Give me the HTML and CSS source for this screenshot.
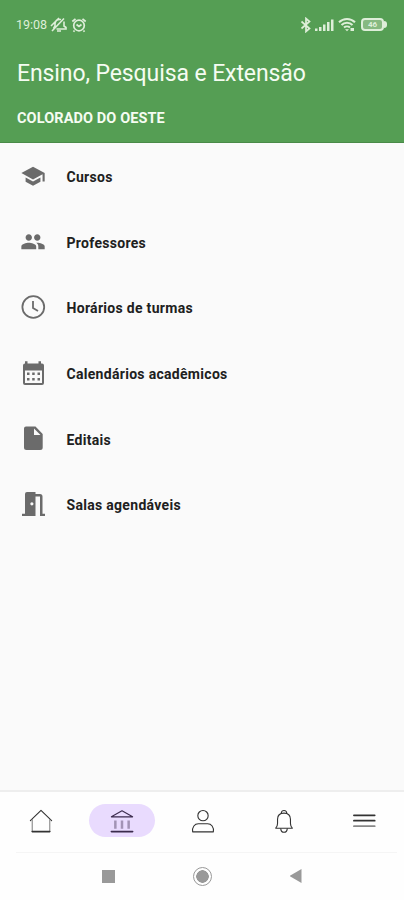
FILE: index.html
```
<!DOCTYPE html>
<html lang="pt-BR">
<head>
  <meta charset="UTF-8" />
  <meta name="viewport" content="width=device-width, initial-scale=1" />
  <title>Ensino, Pesquisa e Extensão</title>
  <link rel="stylesheet" href="styles.css">
</head>
<body>
  <header class="header">
    <div class="status-bar">
      <span class="time">19:08</span>
      <svg class="muted" width="18" height="18" viewBox="0 0 18 18" fill="none" stroke="currentColor" stroke-width="1.6">
        <path d="M3.500 12.500 5 10V7.500C5.500 4.500 8 3 11 3.500M14 5.500V10l2 1.500V13H6.500M7 15h4M2 15 14 2.500M1 10 9 2" />
      </svg>
      <svg class="alarm" width="16" height="16" viewBox="0 0 16 16" fill="none" stroke="currentColor" stroke-width="1.7">
        <circle cx="8" cy="8.500" r="5.300" />
        <path d="M1.300 4.500 4.500 1.800M14.700 4.500 11.500 1.800M5.500 7.500 8 9.500l2.500-2M3.500 13.500 2.500 14.800M12.500 13.500l1 1.300" />
      </svg>
      <div class="status-right">
        <svg width="12" height="16" viewBox="0 0 12 16" fill="none" stroke="currentColor" stroke-width="1.7">
          <path d="M1.500 4.500 9.500 11.500 6 14.500V1.500l3.500 3-8 7" />
        </svg>
        <svg class="signal" width="19" height="14" viewBox="0 0 19 14" fill="currentColor">
          <path d="M0 10.500h2.500V13H0zM4 9h2.500v4H4zM8 6.500h2.500V13H8zM12 4h2.500v9H12zM16 1.500h2.500V13H16z" />
        </svg>
        <svg class="wifi" width="18" height="15" viewBox="0 0 18 15" fill="none" stroke="currentColor" stroke-width="2">
          <path d="M1 5.200C5.500.8 12.500.8 17 5.200M3.500 8c3-3 8-3 11 0M6 10.600c1.700-1.600 4.300-1.600 6 0" />
          <path d="M7 12.200h4L9 14.200zM12.500 11h3.500v3h-3.500z" fill="currentColor" stroke="none" />
        </svg>
        <div class="battery">46</div>
      </div>
    </div>
    <h1>Ensino, Pesquisa e Extensão</h1>
    <h2>COLORADO DO OESTE</h2>
  </header>

  <main>
    <ul class="menu">
      <li>
        <svg width="28" height="28" viewBox="0 0 28 28"><path transform="translate(1.300 1.500) scale(1.060)" d="M5 13.180v4L12 21l7-3.820v-4L12 17l-7-3.820zM12 3 1 9l11 6 9-4.910V17h2V9L12 3z" /></svg>
        <span>Cursos</span>
      </li>
      <li>
        <svg width="28" height="28" viewBox="0 0 28 28"><path transform="translate(1.300 2) scale(1.060)" d="M16 11c1.660 0 2.990-1.340 2.990-3S17.660 5 16 5s-3 1.340-3 3 1.340 3 3 3zm-8 0c1.660 0 2.990-1.340 2.990-3S9.660 5 8 5 5 6.340 5 8s1.340 3 3 3zm0 2c-2.330 0-7 1.170-7 3.500V19h14v-2.500C15 14.170 10.330 13 8 13zm8 0c-.290 0-.620.020-.970.050C16.190 13.890 17 15.020 17 16.500V19h6v-2.500c0-2.330-4.670-3.500-7-3.500z" /></svg>
        <span>Professores</span>
      </li>
      <li>
        <svg class="clock" width="28" height="28" viewBox="0 0 28 28"><circle cx="14.300" cy="14" r="10.900" /><path d="M14 8v7l5 3" /></svg>
        <span>Horários de turmas</span>
      </li>
      <li>
        <svg width="28" height="28" viewBox="0 0 28 28"><path fill-rule="evenodd" d="M6 4.500V2.300h2.500v2.200h11V2.300H22v2.200h1q2 0 2 2V24q0 2-2 2H6q-2 0-2-2V6.500q0-2 2-2zM6 11.500V24h17V11.500zM8 13.500h2.500V16H8zm5.200 0h2.500V16h-2.500zm5.300 0H21V16h-2.500zM8 19h2.500v2.500H8zm5.200 0h2.500v2.500h-2.500zm5.300 0H21v2.500h-2.500z" /></svg>
        <span>Calendários acadêmicos</span>
      </li>
      <li>
        <svg width="28" height="28" viewBox="0 0 28 28"><path fill-rule="evenodd" d="M7 2.500h9.500L23.700 10v13.500q0 2.500-2.500 2.500H7.500Q5 26 5 23.500V4.500q0-2 2-2zM15 4.500v6.500h6.500z" /></svg>
        <span>Editais</span>
      </li>
      <li>
        <svg width="28" height="28" viewBox="0 0 28 28"><path fill-rule="evenodd" d="M3 23.800h3V4q0-2 2-2h8.500v2H21q2.500 0 2.500 2.500v17.300H26V26h-5V6.500h-4.500V26H3zM12.900 12.200a1.600 1.600 0 1 0 0 3.200 1.600 1.600 0 0 0 0-3.200z" /></svg>
        <span>Salas agendáveis</span>
      </li>
    </ul>
  </main>

  <nav class="tabs">
    <a class="tab">
      <svg width="24" height="24" viewBox="0 0 26 26"><path d="M1.500 12.500 13 1.500l11.500 11" /><path class="soft" d="M3.500 11.500V24M22.500 11.500V24" /><path d="M3.500 24.500h19" stroke-width="1.800" /></svg>
    </a>
    <a class="tab active">
      <svg width="24" height="24" viewBox="0 0 26 26"><path d="M1.500 8.500 13 2l11.500 6.500z" /><path class="columns" d="M5.800 12.500v9M13 12.500v9M20.200 12.500v9" /><path d="M1.500 24.500h23" stroke-width="1.800" /></svg>
    </a>
    <a class="tab">
      <svg width="24" height="24" viewBox="0 0 26 26"><circle cx="13" cy="7.200" r="5.600" /><path d="M1.800 24.800C1 19.500 4 16 8 16h10c4 0 7 3.500 6.200 8.800z" /></svg>
    </a>
    <a class="tab">
      <svg width="24" height="24" viewBox="0 0 26 26"><path d="M4 20.800h18c-1.500-1.500-2-2.500-2-5V11c0-4-2.500-6.500-7-6.500S6 7 6 11v4.800c0 2.500-.5 3.500-2 5z" /><path d="M10 4.800C10 .5 16 .5 16 4.800M9.500 21.500c.5 5 6.500 5 7 0" /></svg>
    </a>
    <a class="tab">
      <svg width="24" height="24" viewBox="0 0 26 26"><path d="M1 6.800h22.500M1 12.600h22.500" stroke-width="1.900" /><path class="soft" d="M1 18.600h22.500" stroke-width="1.900" /></svg>
    </a>
  </nav>

  <div class="system-nav">
    <div class="recent"></div>
    <div class="home"></div>
    <div class="back"></div>
  </div>
</body>
</html>
```
FILE: styles.css
```
:root {
  --green: #559e54;
  --icon: #6b6b6b;
}

* {
  box-sizing: border-box;
}

body {
  margin: 0;
  height: 100vh;
  display: flex;
  flex-direction: column;
  font-family: Roboto, sans-serif;
  background: #fafafa;
  color: #202020;
}

svg {
  display: block;
  flex: none;
}

.header {
  height: 143px;
  padding: 14px 16px 0;
  background: var(--green);
  border-bottom: 1px solid #498a48;
  color: #f5fcf2;
}

.status-bar {
  display: flex;
  align-items: center;
  height: 21px;
  color: #deeed9;
}

.time {
  width: 32px;
  font-size: 12.5px;
  white-space: nowrap;
}

.muted {
  margin-left: 2px;
}

.alarm {
  margin-left: 3px;
}

.status-right {
  display: flex;
  align-items: center;
  margin-left: auto;
}

.signal {
  margin-left: 3px;
}

.wifi {
  margin-left: 4px;
}

.battery {
  position: relative;
  width: 23px;
  height: 13px;
  margin: 0 4px 0 5px;
  border: 2px solid currentColor;
  border-radius: 4px;
  background: #87b981;
  font-size: 8px;
  font-weight: bold;
  line-height: 9px;
  text-align: center;
}

.battery::after {
  content: "";
  position: absolute;
  right: -5px;
  top: 1px;
  width: 3px;
  height: 7px;
  border-radius: 0 3px 3px 0;
  background: currentColor;
}

h1 {
  margin: 25px 0 0 1px;
  font-size: 23px;
  font-weight: 400;
  line-height: 28px;
  letter-spacing: -0.1px;
  white-space: nowrap;
}

h2 {
  margin: 22px 0 0 1px;
  font-size: 14.5px;
  font-weight: 700;
  line-height: 18px;
  letter-spacing: 0.1px;
}

main {
  flex: 1;
}

.menu {
  list-style: none;
  margin: 0;
  padding: 0 19px;
}

.menu li {
  display: flex;
  align-items: center;
  gap: 19.5px;
  height: 65.6px;
  font-size: 14px;
  font-weight: 700;
  letter-spacing: 0.3px;
}

.menu li span {
  padding-top: 3px;
}

.menu svg {
  fill: var(--icon);
}

.menu .clock {
  fill: none;
  stroke: var(--icon);
  stroke-width: 1.8;
}

.tabs {
  display: grid;
  grid-template-columns: repeat(5, 81px);
  place-items: center;
  height: 62px;
  padding-bottom: 3px;
  border-top: 2px solid #eeeeee;
  background: #fefefe;
}

.tab {
  display: flex;
  align-items: center;
  justify-content: center;
  width: 66px;
  height: 33px;
  border-radius: 17px;
}

.tab svg {
  fill: none;
  stroke: #333;
  stroke-width: 1.2;
  stroke-linejoin: round;
  stroke-linecap: round;
}

.tab .soft {
  stroke: #888;
}

.tab.active {
  background: #e9dbfe;
}

.tab.active svg {
  stroke: #3b2b4d;
}

.tab.active .columns {
  stroke: #a293b5;
  stroke-width: 2.7;
  stroke-linecap: butt;
}

.system-nav {
  display: grid;
  grid-template-columns: repeat(3, 93.5px);
  justify-content: center;
  place-items: center;
  height: 48px;
  background: linear-gradient(#f5f5f5, #f5f5f5) 16px 0 / 381px 1px no-repeat #fefefe;
}

.recent {
  width: 13px;
  height: 13px;
  background: #999;
}

.home {
  width: 19px;
  height: 19px;
  border: 1.5px solid #999;
  border-radius: 50%;
  background: radial-gradient(circle, #999 6px, #fefefe 6.5px);
}

.back {
  width: 12px;
  height: 14px;
  background: #999;
  clip-path: polygon(0 50%, 100% 0, 100% 100%);
}
```
